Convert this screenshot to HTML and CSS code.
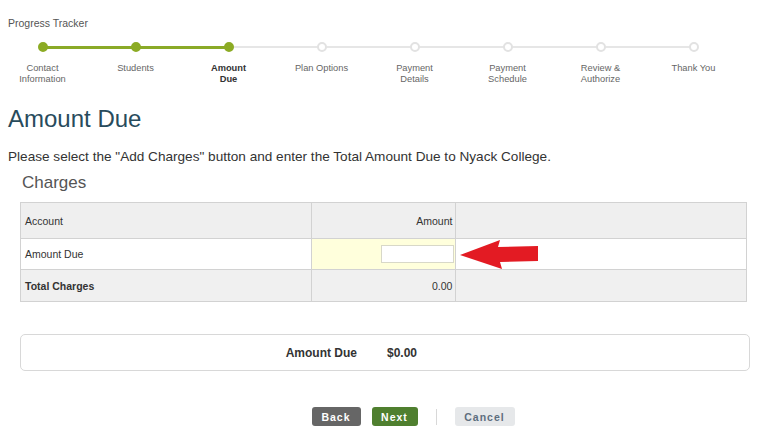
FILE: index.html
```html
<!DOCTYPE html>
<html lang="en">
<head>
<meta charset="utf-8">
<title>Amount Due</title>
<link rel="stylesheet" href="styles.css">
</head>
<body>
<div class="page">
  <div class="tracker-title">Progress Tracker</div>
  <div class="tracker">
    <div class="step done first"><div class="dot-row"><span class="dot"></span></div><div class="label">Contact<br>Information</div></div>
    <div class="step done"><div class="dot-row"><span class="dot"></span></div><div class="label">Students</div></div>
    <div class="step done current"><div class="dot-row"><span class="dot"></span></div><div class="label">Amount<br>Due</div></div>
    <div class="step"><div class="dot-row"><span class="dot"></span></div><div class="label">Plan Options</div></div>
    <div class="step"><div class="dot-row"><span class="dot"></span></div><div class="label">Payment<br>Details</div></div>
    <div class="step"><div class="dot-row"><span class="dot"></span></div><div class="label">Payment<br>Schedule</div></div>
    <div class="step"><div class="dot-row"><span class="dot"></span></div><div class="label">Review &amp;<br>Authorize</div></div>
    <div class="step last"><div class="dot-row"><span class="dot"></span></div><div class="label">Thank You</div></div>
  </div>

  <h1 class="heading">Amount Due</h1>
  <p class="intro">Please select the "Add Charges" button and enter the Total Amount Due to Nyack College.</p>
  <h2 class="section-title">Charges</h2>

  <table class="charges">
    <colgroup><col class="c1"><col class="c2"><col class="c3"></colgroup>
    <tr class="head"><td>Account</td><td class="num">Amount</td><td></td></tr>
    <tr class="entry"><td>Amount Due</td><td class="num input-cell"><input class="amount-input" type="text"></td><td class="arrow-cell">
      <svg class="arrow" width="80" height="30" viewBox="0 0 80 30"><polygon points="0,15 40,0 38,7 78,6 78,21 40,22 42,29" fill="#e31b23"/></svg>
    </td></tr>
    <tr class="total"><td><b>Total Charges</b></td><td class="num">0.00</td><td></td></tr>
  </table>

  <div class="summary">
    <div class="summary-label">Amount Due</div>
    <div class="summary-value">$0.00</div>
  </div>

  <div class="actions">
    <button class="btn btn-back">Back</button>
    <button class="btn btn-next">Next</button>
    <span class="sep"></span>
    <button class="btn btn-cancel">Cancel</button>
  </div>
</div>
</body>
</html>
```

FILE: styles.css
```css
* { box-sizing: border-box; }
body {
  margin: 0;
  font-family: "Liberation Sans", Arial, sans-serif;
  color: #333;
  background: #fff;
}
.page { padding: 0 8px; }

.tracker-title {
  margin-top: 17px;
  font-size: 10.5px;
  line-height: 12px;
  color: #555;
}
.tracker {
  display: grid;
  grid-template-columns: repeat(8, 93px);
  margin: 13px 0 0 -12px;
}
.step {
  display: flex;
  flex-direction: column;
  align-items: center;
}
.dot-row {
  position: relative;
  width: 100%;
  height: 10px;
  display: flex;
  justify-content: center;
}
.dot-row::before,
.dot-row::after {
  content: "";
  position: absolute;
  top: 4px;
  height: 2px;
  width: 50%;
  background: #e6e6e6;
}
.dot-row::before { left: 0; }
.dot-row::after { right: 0; }
.first .dot-row::before,
.last .dot-row::after { display: none; }
.done .dot-row::before,
.done .dot-row::after {
  background: #8aaa28;
  height: 3px;
  top: 3.5px;
}
.current .dot-row::after {
  background: #e6e6e6;
  height: 2px;
  top: 4px;
}
.dot {
  position: relative;
  z-index: 1;
  width: 10px;
  height: 10px;
  border-radius: 50%;
  background: #fff;
  border: 2px solid #e2e2e2;
}
.done .dot {
  background: #8cab24;
  border-color: #8cab24;
}
.label {
  margin-top: 11px;
  font-size: 9.3px;
  line-height: 11px;
  text-align: center;
  color: #666;
}
.current .label {
  font-weight: bold;
  color: #333;
}

.heading {
  margin: 20px 0 0;
  font-size: 24px;
  line-height: 28px;
  font-weight: normal;
  color: #284b5c;
}
.intro {
  margin: 16px 0 0;
  font-size: 13.6px;
  line-height: 16px;
  color: #333;
}
.section-title {
  margin: 8px 0 0;
  padding-left: 14px;
  font-size: 17px;
  line-height: 20px;
  font-weight: normal;
  color: #555;
}

.charges {
  margin: 9px 0 0 12px;
  border-collapse: collapse;
  width: 727px;
  font-size: 10.5px;
  color: #333;
}
.charges col.c1 { width: 291px; }
.charges col.c2 { width: 145px; }
.charges col.c3 { width: 291px; }
.charges td {
  border: 1px solid #d2d2d2;
  padding: 0 3px 0 4px;
}
.charges .num { text-align: right; }
.charges tr.head { height: 36px; background: #efefef; }
.charges tr.entry { height: 31px; background: #fff; }
.charges tr.total { height: 32px; background: #f0f0f0; }
.charges .input-cell { background: #ffffdc; padding-right: 1px; }
.amount-input {
  display: block;
  margin-left: auto;
  width: 73px;
  height: 18px;
  border: 1px solid #d8d8c8;
  background: #fff;
  padding: 0;
}
.arrow-cell { position: relative; }
.arrow {
  position: absolute;
  left: 4px;
  top: 1px;
}

.summary {
  margin: 32px 0 0 12px;
  width: 730px;
  height: 37px;
  border: 1px solid #d8d8d8;
  border-radius: 5px;
  display: grid;
  grid-template-columns: 1fr 1fr;
  align-items: center;
  font-size: 12px;
  font-weight: bold;
  color: #333;
}
.summary-label { text-align: right; padding-right: 28px; }
.summary-value { padding-left: 2px; }

.actions {
  margin-top: 36px;
  padding-left: 67px;
  display: flex;
  justify-content: center;
  align-items: center;
}
.btn {
  height: 19px;
  border: none;
  border-radius: 3px;
  font-family: "Liberation Sans", Arial, sans-serif;
  font-size: 10.5px;
  font-weight: bold;
  letter-spacing: 1px;
  padding: 0;
  color: #fff;
}
.btn-back { width: 49px; background: #666; }
.btn-next { width: 46px; margin-left: 11px; background: #4f7f2f; }
.sep {
  width: 1px;
  height: 16px;
  background: #d8d8d8;
  margin: 0 18px 0 18px;
}
.btn-cancel { width: 60px; background: #e6e8ea; color: #5d6e7e; }
```
